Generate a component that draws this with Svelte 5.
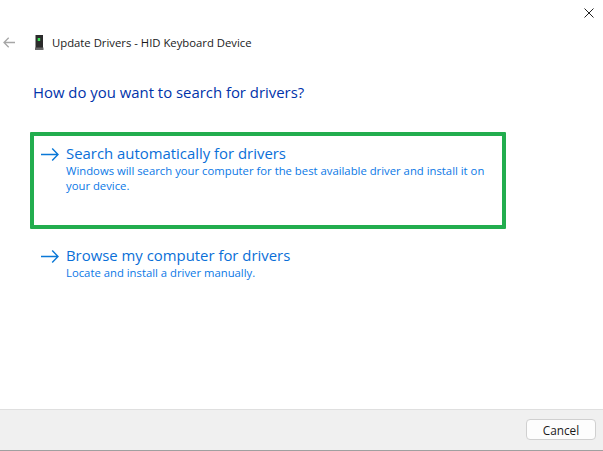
<script>
  const options = [
    { title: 'Search automatically for drivers', desc: 'Windows will search your computer for the best available driver and install it on your device.', boxed: true },
    { title: 'Browse my computer for drivers', desc: 'Locate and install a driver manually.', boxed: false }
  ];
</script>

<div class="window">
  <div class="close-row">
    <svg class="close" width="10" height="10" viewBox="0 0 10 10"><path d="M0.5 0.5L9.5 9.5M9.5 0.5L0.5 9.5" stroke="#222" stroke-width="1" fill="none"/></svg>
  </div>
  <div class="header">
    <svg class="back" width="12" height="11" viewBox="0 0 12 11"><path d="M12 5.5H1M5.7 0.7L1 5.5L5.7 10.3" stroke="#a6a6a6" stroke-width="1.3" fill="none"/></svg>
    <svg class="device" width="9" height="15" viewBox="0 0 9 15">
      <rect x="0.5" y="0" width="7.5" height="13" fill="#2b2b2b"/>
      <rect x="0" y="12.5" width="8.5" height="2.5" fill="#666"/>
      <rect x="2.7" y="3" width="2.5" height="3" fill="#3fe05a"/>
    </svg>
    <span class="wintitle">Update Drivers - HID Keyboard Device</span>
  </div>
  <main class="content">
    <h1>How do you want to search for drivers?</h1>
    <div class="options">
      {#each options as o}
        <div class="option" class:boxed={o.boxed}>
          <svg class="arrow" width="18" height="13" viewBox="0 0 18 13"><path d="M0 6.5H17M11.2 0.5L17 6.5L11.2 12.5" stroke="#0a78d7" stroke-width="1.4" fill="none"/></svg>
          <div class="text">
            <div class="title">{o.title}</div>
            <div class="desc">{o.desc}</div>
          </div>
        </div>
      {/each}
    </div>
  </main>
  <footer>
    <button>Cancel</button>
  </footer>
</div>

<style>
  :global(body) { margin: 0; background: #fff; }
  .window {
    width: 603px; height: 451px; display: flex; flex-direction: column;
    font-family: "Open Sans", "Noto Sans", sans-serif; background: #fff; overflow: hidden;
  }
  .close-row { height: 30px; display: flex; justify-content: flex-end; align-items: flex-start; padding: 8px 9px 0 0; box-sizing: border-box; }
  .header { height: 26px; display: flex; align-items: center; padding-left: 3px; }
  .back { margin-right: 20px; margin-top: -1px; }
  .device { margin-right: 8px; margin-top: -1px; }
  .wintitle { font-size: 11.3px; color: #1a1a1a; margin-top: -2px; }
  .content { flex: 1; padding: 26px 0 0 33px; }
  h1 { margin: 0; font-weight: 400; font-size: 14.9px; line-height: 20px; color: #0033aa; }
  .options { margin-top: 30px; margin-left: -3px; display: flex; flex-direction: column; gap: 5px; }
  .option { width: 476px; height: 97px; box-sizing: border-box; display: flex; padding: 7px 3px 0 7px; border: 4px solid transparent; border-radius: 1px; }
  .option.boxed { border-color: #22ad4e; }
  .arrow { margin-top: 5px; margin-right: 7px; flex: none; }
  .title { font-size: 14.9px; line-height: 20px; color: #0a6fd8; }
  .desc { font-size: 11.3px; line-height: 15px; color: #0a78e6; }
  footer { height: 42px; box-sizing: border-box; background: #f0f0f0; border-top: 1px solid #dfdfdf; border-bottom: 1px solid #a0a0a0; display: flex; justify-content: flex-end; align-items: flex-start; padding: 9px 7px 0 0; }
  button { width: 70px; height: 21px; padding: 0; background: #fdfdfd; border: 1px solid #d0d0d0; border-radius: 4px; font: inherit; font-size: 11.8px; color: #1a1a1a; }
</style>
